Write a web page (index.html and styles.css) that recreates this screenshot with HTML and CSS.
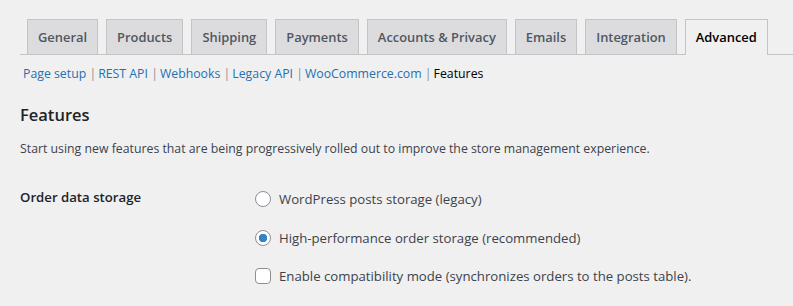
FILE: index.html
```html
<!DOCTYPE html>
<html lang="en">

<head>
    <meta charset="UTF-8">
    <meta name="viewport" content="width=device-width, initial-scale=1.0">
    <title>Settings - Advanced</title>
    <link rel="stylesheet" href="styles.css">
</head>

<body>
    <div class="wrap">
        <nav class="nav-tabs">
            <a class="nav-tab" href="#">General</a>
            <a class="nav-tab" href="#">Products</a>
            <a class="nav-tab" href="#">Shipping</a>
            <a class="nav-tab" href="#">Payments</a>
            <a class="nav-tab" href="#">Accounts &amp; Privacy</a>
            <a class="nav-tab" href="#">Emails</a>
            <a class="nav-tab" href="#">Integration</a>
            <a class="nav-tab active" href="#">Advanced</a>
        </nav>

        <ul class="subsub">
            <li><a href="#">Page setup</a> |</li>
            <li><a href="#">REST API</a> |</li>
            <li><a href="#">Webhooks</a> |</li>
            <li><a href="#">Legacy API</a> |</li>
            <li><a href="#">WooCommerce.com</a> |</li>
            <li><a class="current" href="#">Features</a></li>
        </ul>

        <h2 class="section-title">Features</h2>
        <p class="section-desc">Start using new features that are being progressively rolled out to improve the store management experience.</p>

        <div class="form-row">
            <div class="form-label">Order data storage</div>
            <div class="form-field">
                <label class="option">
                    <input type="radio" name="storage">
                    <span>WordPress posts storage (legacy)</span>
                </label>
                <label class="option">
                    <input type="radio" name="storage" checked>
                    <span>High-performance order storage (recommended)</span>
                </label>
                <label class="option">
                    <input type="checkbox">
                    <span>Enable compatibility mode (synchronizes orders to the posts table).</span>
                </label>
            </div>
        </div>
    </div>
</body>

</html>
```

FILE: styles.css
```css
body {
    margin: 0;
    background: #f0f0f1;
    color: #3c434a;
    font-family: "Open Sans", sans-serif;
    font-size: 12.3px;
}

.wrap {
    padding: 19px 0 0 20px;
}

/* tabs */
.nav-tabs {
    display: flex;
    border-bottom: 1px solid #c3c4c7;
    padding-left: 7px;
    gap: 8px;
}

.nav-tab {
    display: block;
    padding: 0 10px;
    height: 34px;
    line-height: 34px;
    font-size: 12.9px;
    font-weight: 600;
    color: #50575e;
    text-decoration: none;
    background: #dcdcde;
    border: 1px solid #c3c4c7;
    border-bottom: none;
    margin-bottom: -1px;
    white-space: nowrap;
}

.nav-tab.active {
    background: #f0f0f1;
    color: #000;
    height: 35px;
}

/* sub links */
.subsub {
    list-style: none;
    margin: 8px 0 0;
    padding: 0 0 0 3px;
    display: flex;
    line-height: 22px;
    color: #8c8f94;
}

.subsub li {
    margin-right: 2px;
    white-space: pre;
}

.subsub a {
    color: #2271b1;
    text-decoration: none;
}

.subsub a.current {
    color: #000;
}

/* section */
.section-title {
    margin: 18px 0 0;
    font-size: 16.5px;
    font-weight: 600;
    color: #1d2327;
}

.section-desc {
    margin: 14px 0 0;
}

.form-row {
    display: grid;
    grid-template-columns: 235px 1fr;
    margin-top: 31px;
}

.form-label {
    font-size: 13.2px;
    font-weight: 600;
    color: #1d2327;
    line-height: 22px;
    margin-top: -2px;
}

.form-field {
    display: flex;
    flex-direction: column;
    gap: 16.5px;
}

.option {
    display: flex;
    align-items: center;
    gap: 8px;
    font-size: 13.2px;
    color: #3c434a;
    line-height: 22px;
}

.option input {
    appearance: none;
    margin: 0;
    width: 16px;
    height: 16px;
    border: 1px solid #8c8f94;
    background: #fff;
    flex: none;
}

.option input[type="radio"] {
    border-radius: 50%;
}

.option input[type="checkbox"] {
    border-radius: 4px;
}

.option input[type="radio"]:checked {
    background: radial-gradient(circle, #3582c4 0 4px, #fff 4.5px);
}
```
